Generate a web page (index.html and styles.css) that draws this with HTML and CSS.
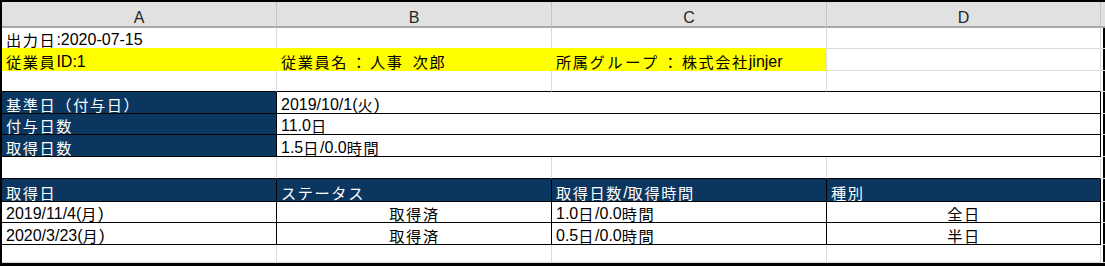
FILE: index.html
```html
<!DOCTYPE html>
<html lang="ja">
<head>
<meta charset="utf-8">
<title>Sheet</title>
<link rel="stylesheet" href="styles.css">
</head>
<body>
<div class="sheet">
  <div class="ch">A</div><div class="ch">B</div><div class="ch">C</div><div class="ch">D</div><div class="ch e"></div>

  <div class="c yt"><span class="j">出力日</span>:2020-07-15</div><div class="c yt"></div><div class="c yt"></div><div class="c"></div><div class="c e"></div>

  <div class="c y"><span class="j">従業員</span>ID:1</div><div class="c y"><span class="j">従業員名<span class="k">：</span>人事&#8194;次郎</span></div><div class="c y yl"><span class="j">所属<span class="w">グループ</span><span class="k">：</span>株式会社</span>jinjer</div><div class="c"></div><div class="c e"></div>

  <div class="c tb"></div><div class="c tb"></div><div class="c tb"></div><div class="c tb"></div><div class="c e"></div>

  <div class="c h"><span class="j">基準日（付与日）</span></div><div class="c v s3">2019/10/1(<span class="j">火</span>)</div><div class="c e"></div>
  <div class="c h"><span class="j">付与日数</span></div><div class="c v s3">11.0<span class="j">日</span></div><div class="c e"></div>
  <div class="c h"><span class="j">取得日数</span></div><div class="c v s3">1.5<span class="j">日</span>/0.0<span class="j">時間</span></div><div class="c e"></div>

  <div class="c tb"></div><div class="c tb"></div><div class="c tb"></div><div class="c tb"></div><div class="c e"></div>

  <div class="c h"><span class="j">取得日</span></div><div class="c h"><span class="j">ステータス</span></div><div class="c h"><span class="j">取得日数</span>/<span class="j">取得時間</span></div><div class="c h"><span class="j">種別</span></div><div class="c e"></div>

  <div class="c v">2019/11/4(<span class="j">月</span>)</div><div class="c v ctr"><span class="j">取得済</span></div><div class="c v">1.0<span class="j">日</span>/0.0<span class="j">時間</span></div><div class="c v ctr"><span class="j">全日</span></div><div class="c e"></div>

  <div class="c v">2020/3/23(<span class="j">月</span>)</div><div class="c v ctr"><span class="j">取得済</span></div><div class="c v">0.5<span class="j">日</span>/0.0<span class="j">時間</span></div><div class="c v ctr"><span class="j">半日</span></div><div class="c e"></div>

  <div class="c"></div><div class="c"></div><div class="c"></div><div class="c"></div><div class="c e"></div>
</div>
</body>
</html>
```
FILE: styles.css
```css
* { box-sizing: border-box; }
html, body { margin: 0; padding: 0; background: #fff; }
body { width: 1105px; height: 266px; overflow: hidden; }

.sheet {
  width: 1105px;
  height: 266px;
  border: 2px solid #000;
  border-bottom-width: 3px;
  display: grid;
  grid-template-columns: 275px 275px 275px 274px 1fr;
  grid-template-rows: 26px 21px 22px 21px 22px 21px 22px 22px 23px 21px 22px 1fr;
  font-family: "Liberation Sans", "Noto Sans CJK JP", sans-serif;
  font-size: 16px;
  color: #000;
}

.ch {
  background: #e1e1e1;
  border-right: 1px solid #c4c4c4;
  border-bottom: 2px solid #a8a8a8;
  display: flex;
  align-items: flex-end;
  justify-content: center;
  line-height: 17px;
  color: #262626;
}

.c {
  border-right: 1px solid #dadada;
  border-bottom: 1px solid #dadada;
  display: flex;
  align-items: flex-end;
  padding: 0 3px 0 4px;
  line-height: 17px;
  white-space: nowrap;
  overflow: visible;
}

.e { border-right: none; }

.j {
  display: inline-block;
  font-family: "Noto Sans CJK JP", sans-serif;
  font-size: 15.2px;
  line-height: 17px;
  height: 17px;
  letter-spacing: 1.6px;
}
.k { padding: 0 2px 0 3px; }
.w { letter-spacing: 2.6px; }

.y { background: #ffff00; border-right-color: #ffff00; border-bottom-color: #ffff00; }
.y.yl { border-right-color: #dadada; }
.yt { border-bottom-color: #ffff00; }
.tb { border-bottom-color: #000; }

.h {
  background: #0b365f;
  color: #fff;
  border-right-color: #000;
  border-bottom-color: #000;
}
.v { border-right-color: #000; border-bottom-color: #000; }
.s3 { grid-column: span 3; }
.ctr { justify-content: center; }
```
